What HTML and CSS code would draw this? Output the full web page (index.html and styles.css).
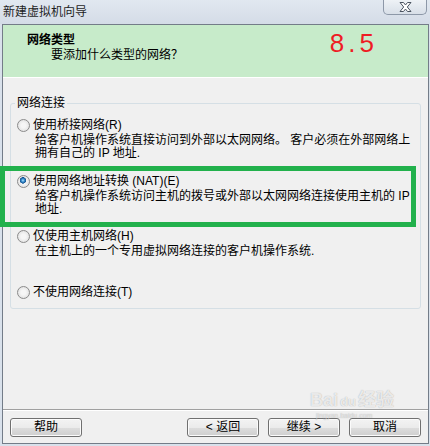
FILE: index.html
```html
<!DOCTYPE html>
<html lang="zh-CN">
<head>
    <meta charset="UTF-8">
    <meta name="viewport" content="width=device-width, initial-scale=1.0">
    <title>新建虚拟机向导</title>
    <link rel="stylesheet" href="styles.css">
</head>
<body>

    <div class="window">
        <div class="titlebar">
            <span class="title">新建虚拟机向导</span>
            <button class="close-btn" aria-label="关闭">
                <svg width="13" height="10" viewBox="0 0 13 10">
                    <path d="M1 0.5 H4.5 L6.5 3 L8.5 0.5 H12 L8.3 5 L12 9.5 H8.5 L6.5 7 L4.5 9.5 H1 L4.7 5 Z" fill="#fff" stroke="#4b5461" stroke-width="1" stroke-linejoin="round"/>
                </svg>
            </button>
        </div>

        <div class="client">
            <div class="header">
                <div class="header-text">
                    <div class="header-title">网络类型</div>
                    <div class="header-sub">要添加什么类型的网络？</div>
                </div>
                <div class="step-mark">8.5</div>
            </div>

            <div class="main">
                <fieldset class="group">
                    <legend>网络连接</legend>

                    <div class="option">
                        <label class="option-label"><input type="radio" name="net" class="radio">使用桥接网络(R)</label>
                        <div class="option-desc">给客户机操作系统直接访问到外部以太网网络。 客户必须在外部网络上拥有自己的 IP 地址.</div>
                    </div>

                    <div class="option marked">
                        <label class="option-label"><input type="radio" name="net" class="radio" checked>使用网络地址转换 (NAT)(E)</label>
                        <div class="option-desc">给客户机操作系统访问主机的拨号或外部以太网网络连接使用主机的 IP 地址.</div>
                        <div class="mark-box"></div>
                    </div>

                    <div class="option">
                        <label class="option-label"><input type="radio" name="net" class="radio">仅使用主机网络(H)</label>
                        <div class="option-desc">在主机上的一个专用虚拟网络连接的客户机操作系统.</div>
                    </div>

                    <div class="option last">
                        <label class="option-label"><input type="radio" name="net" class="radio">不使用网络连接(T)</label>
                    </div>
                </fieldset>
            </div>

            <div class="footer">
                <button class="btn btn-help">帮助</button>
                <button class="btn">&lt; 返回</button>
                <button class="btn">继续 &gt;</button>
                <button class="btn">取消</button>
            </div>
        </div>

        <div class="watermark">
            <div class="wm-logo">Bai<span class="wm-paw">du</span>经验</div>
            <div class="wm-url">jingyan.baidu.com</div>
        </div>
    </div>

</body>
</html>
```

FILE: styles.css
```css
body {
    margin: 0;
    background-color: #d9e1eb;
    font-family: "Liberation Sans", "Noto Sans CJK SC", sans-serif;
    font-size: 12px;
    color: #000;
}
.window {
    position: relative;
    height: 446px;
    display: flex;
    flex-direction: column;
    overflow: hidden;
}
.titlebar {
    height: 24px;
    display: flex;
    align-items: flex-start;
    justify-content: space-between;
    background: linear-gradient(#e1e8f0, #d4dce7);
}
.title {
    padding: 3px 0 0 3px;
    line-height: 15px;
    font-family: "Noto Sans CJK SC", sans-serif;
    color: #1e1e1e;
}
.close-btn {
    width: 44px;
    height: 15px;
    margin-right: 3px;
    padding: 0;
    border: 1px solid #8d98a8;
    border-top: none;
    border-radius: 0 0 5px 5px;
    background: linear-gradient(#eef2f6, #d8dfe8);
    display: flex;
    align-items: center;
    justify-content: center;
}
.client {
    flex: 1;
    margin: 0 1px 2px 2px;
    border: 1px solid #737c88;
    background-color: #f0f0f0;
    display: flex;
    flex-direction: column;
}
.header {
    height: 52px;
    padding-left: 24px;
    background-color: #c7ebca;
    border-bottom: 1px solid #fff;
    display: flex;
    align-items: flex-start;
}
.header-text {
    padding-top: 7px;
}
.header-title {
    font-weight: bold;
    line-height: 16px;
}
.header-sub {
    padding-left: 24px;
    line-height: 14px;
}
.step-mark {
    margin-left: auto;
    margin-right: 50px;
    padding-top: 3px;
    font-size: 26px;
    line-height: 30px;
    letter-spacing: 4px;
    color: #ee1c25;
}
.main {
    flex: 1;
    padding: 17px 7px 0;
}
.group {
    margin: 0;
    padding: 7px 6px 8px;
    border: 1px solid #d5dfe5;
    border-radius: 3px;
}
.group legend {
    padding: 0 2px;
    margin-left: -2px;
    line-height: 16px;
}
.option {
    height: 55.5px;
}
.option.last {
    height: auto;
}
.option.marked {
    position: relative;
}
.option-label {
    display: flex;
    align-items: center;
    gap: 3px;
    line-height: 15px;
}
.radio {
    appearance: none;
    -webkit-appearance: none;
    margin: 0;
    width: 13px;
    height: 13px;
    box-sizing: border-box;
    border: 1px solid #8b8b8b;
    border-radius: 50%;
    background: radial-gradient(circle, #f6f6f6 30%, #d9d9d9 100%);
}
.radio:checked {
    background:
        radial-gradient(circle at 45% 40%, #b5e6ff 0, #3a8fd0 1.5px, #114f8c 3px, transparent 3.4px),
        radial-gradient(circle, #f6f6f6 30%, #d9d9d9 100%);
}
.option-desc {
    padding-left: 18px;
    margin-top: 1px;
    line-height: 13px;
}
.mark-box {
    position: absolute;
    left: -17px;
    top: -8px;
    width: 416px;
    height: 61px;
    box-sizing: border-box;
    border: 5px solid #22b14c;
    pointer-events: none;
}
.footer {
    display: flex;
    gap: 9px;
    padding: 8px 7px 6px;
    border-top: 1px solid #a0a0a0;
    box-shadow: inset 0 1px #fff;
}
.btn {
    width: 72px;
    height: 19px;
    padding: 0;
    font: inherit;
    line-height: 17px;
    color: #000;
    border: 1px solid #707070;
    border-radius: 3px;
    background: linear-gradient(#f3f3f3, #ebebeb 50%, #dddddd 51%, #cfcfcf);
    box-shadow: inset 0 0 0 1px #fbfbfb;
}
.btn-help {
    margin-right: auto;
}
.watermark {
    position: absolute;
    left: 310px;
    top: 390px;
    pointer-events: none;
    color: rgba(255, 255, 255, 0.75);
    text-shadow: 0 0 1px rgba(110, 110, 110, 0.6);
}
.wm-logo {
    font-size: 18px;
    font-weight: bold;
    line-height: 20px;
}
.wm-paw {
    font-size: 13px;
    margin: 0 2px;
}
.wm-url {
    font-size: 7px;
    line-height: 8px;
    margin-left: 6px;
    color: rgba(255, 255, 255, 0.55);
}
```
